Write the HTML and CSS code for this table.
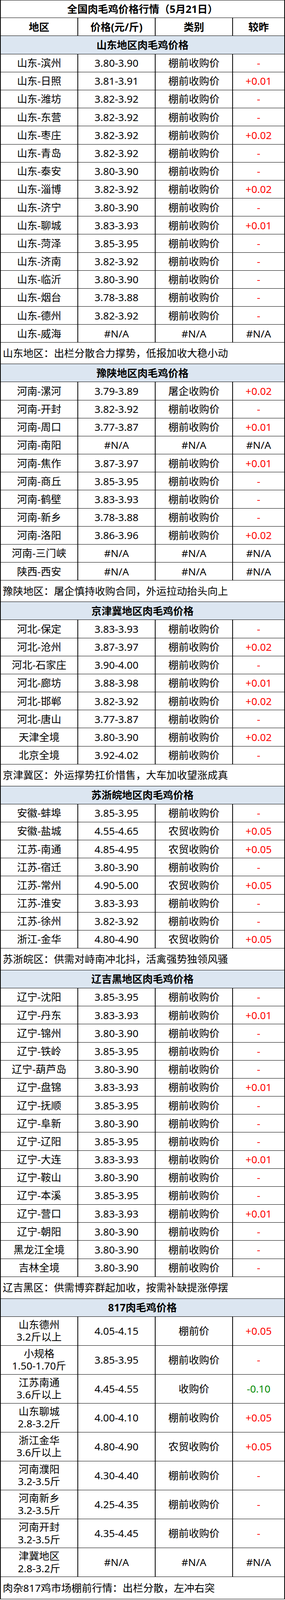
FILE: index.html
```html
<!DOCTYPE html>
<html lang="zh-CN">
<head>
<meta charset="utf-8">
<title>全国肉毛鸡价格行情</title>
<link rel="stylesheet" href="styles.css">
</head>
<body>
<div class="sheet">
  <div class="row title">全国肉毛鸡价格行情（5月21日）</div>
  <div class="row head">
    <div class="c">地区</div><div class="c">价格(元/斤)</div><div class="c">类别</div><div class="c">较昨</div>
  </div>

  <div class="row section">山东地区肉毛鸡价格</div>
  <div class="row"><div class="c">山东-滨州</div><div class="c">3.80-3.90</div><div class="c">棚前收购价</div><div class="c up">-</div></div>
  <div class="row"><div class="c">山东-日照</div><div class="c">3.81-3.91</div><div class="c">棚前收购价</div><div class="c up">+0.01</div></div>
  <div class="row"><div class="c">山东-潍坊</div><div class="c">3.82-3.92</div><div class="c">棚前收购价</div><div class="c up">-</div></div>
  <div class="row"><div class="c">山东-东营</div><div class="c">3.82-3.92</div><div class="c">棚前收购价</div><div class="c up">-</div></div>
  <div class="row"><div class="c">山东-枣庄</div><div class="c">3.82-3.92</div><div class="c">棚前收购价</div><div class="c up">+0.02</div></div>
  <div class="row"><div class="c">山东-青岛</div><div class="c">3.82-3.92</div><div class="c">棚前收购价</div><div class="c up">-</div></div>
  <div class="row"><div class="c">山东-泰安</div><div class="c">3.80-3.90</div><div class="c">棚前收购价</div><div class="c up">-</div></div>
  <div class="row"><div class="c">山东-淄博</div><div class="c">3.82-3.92</div><div class="c">棚前收购价</div><div class="c up">+0.02</div></div>
  <div class="row"><div class="c">山东-济宁</div><div class="c">3.80-3.90</div><div class="c">棚前收购价</div><div class="c up">-</div></div>
  <div class="row"><div class="c">山东-聊城</div><div class="c">3.83-3.93</div><div class="c">棚前收购价</div><div class="c up">+0.01</div></div>
  <div class="row"><div class="c">山东-菏泽</div><div class="c">3.85-3.95</div><div class="c">棚前收购价</div><div class="c up">-</div></div>
  <div class="row"><div class="c">山东-济南</div><div class="c">3.82-3.92</div><div class="c">棚前收购价</div><div class="c up">-</div></div>
  <div class="row"><div class="c">山东-临沂</div><div class="c">3.80-3.90</div><div class="c">棚前收购价</div><div class="c up">-</div></div>
  <div class="row"><div class="c">山东-烟台</div><div class="c">3.78-3.88</div><div class="c">棚前收购价</div><div class="c up">-</div></div>
  <div class="row"><div class="c">山东-德州</div><div class="c">3.82-3.92</div><div class="c">棚前收购价</div><div class="c up">-</div></div>
  <div class="row"><div class="c">山东-威海</div><div class="c">#N/A</div><div class="c">#N/A</div><div class="c">#N/A</div></div>
  <div class="row note note-short">山东地区：出栏分散合力撑势，低报加收大稳小动</div>

  <div class="row section">豫陕地区肉毛鸡价格</div>
  <div class="row"><div class="c">河南-漯河</div><div class="c">3.79-3.89</div><div class="c">屠企收购价</div><div class="c up">+0.02</div></div>
  <div class="row"><div class="c">河南-开封</div><div class="c">3.82-3.92</div><div class="c">棚前收购价</div><div class="c up">-</div></div>
  <div class="row"><div class="c">河南-周口</div><div class="c">3.77-3.87</div><div class="c">棚前收购价</div><div class="c up">+0.01</div></div>
  <div class="row"><div class="c">河南-南阳</div><div class="c">#N/A</div><div class="c">#N/A</div><div class="c">#N/A</div></div>
  <div class="row"><div class="c">河南-焦作</div><div class="c">3.87-3.97</div><div class="c">棚前收购价</div><div class="c up">+0.01</div></div>
  <div class="row"><div class="c">河南-商丘</div><div class="c">3.85-3.95</div><div class="c">棚前收购价</div><div class="c up">-</div></div>
  <div class="row"><div class="c">河南-鹤壁</div><div class="c">3.83-3.93</div><div class="c">棚前收购价</div><div class="c up">-</div></div>
  <div class="row"><div class="c">河南-新乡</div><div class="c">3.78-3.88</div><div class="c">棚前收购价</div><div class="c up">-</div></div>
  <div class="row"><div class="c">河南-洛阳</div><div class="c">3.86-3.96</div><div class="c">棚前收购价</div><div class="c up">+0.02</div></div>
  <div class="row"><div class="c">河南-三门峡</div><div class="c">#N/A</div><div class="c">#N/A</div><div class="c">#N/A</div></div>
  <div class="row"><div class="c">陕西-西安</div><div class="c">#N/A</div><div class="c">#N/A</div><div class="c">#N/A</div></div>
  <div class="row note note-short">豫陕地区：屠企慎持收购合同，外运拉动抬头向上</div>

  <div class="row section">京津冀地区肉毛鸡价格</div>
  <div class="row"><div class="c">河北-保定</div><div class="c">3.83-3.93</div><div class="c">棚前收购价</div><div class="c up">-</div></div>
  <div class="row"><div class="c">河北-沧州</div><div class="c">3.87-3.97</div><div class="c">棚前收购价</div><div class="c up">+0.02</div></div>
  <div class="row"><div class="c">河北-石家庄</div><div class="c">3.90-4.00</div><div class="c">棚前收购价</div><div class="c up">-</div></div>
  <div class="row"><div class="c">河北-廊坊</div><div class="c">3.88-3.98</div><div class="c">棚前收购价</div><div class="c up">+0.01</div></div>
  <div class="row"><div class="c">河北-邯郸</div><div class="c">3.82-3.92</div><div class="c">棚前收购价</div><div class="c up">+0.02</div></div>
  <div class="row"><div class="c">河北-唐山</div><div class="c">3.77-3.87</div><div class="c">棚前收购价</div><div class="c up">-</div></div>
  <div class="row"><div class="c">天津全境</div><div class="c">3.80-3.90</div><div class="c">棚前收购价</div><div class="c up">+0.02</div></div>
  <div class="row"><div class="c">北京全境</div><div class="c">3.92-4.02</div><div class="c">棚前收购价</div><div class="c up">-</div></div>
  <div class="row note">京津冀区：外运撑势扛价惜售，大车加收望涨成真</div>

  <div class="row section">苏浙皖地区肉毛鸡价格</div>
  <div class="row"><div class="c">安徽-蚌埠</div><div class="c">3.85-3.95</div><div class="c">棚前收购价</div><div class="c up">-</div></div>
  <div class="row"><div class="c">安徽-盐城</div><div class="c">4.55-4.65</div><div class="c">农贸收购价</div><div class="c up">+0.05</div></div>
  <div class="row"><div class="c">江苏-南通</div><div class="c">4.85-4.95</div><div class="c">农贸收购价</div><div class="c up">+0.05</div></div>
  <div class="row"><div class="c">江苏-宿迁</div><div class="c">3.80-3.90</div><div class="c">棚前收购价</div><div class="c up">-</div></div>
  <div class="row"><div class="c">江苏-常州</div><div class="c">4.90-5.00</div><div class="c">农贸收购价</div><div class="c up">+0.05</div></div>
  <div class="row"><div class="c">江苏-淮安</div><div class="c">3.83-3.93</div><div class="c">棚前收购价</div><div class="c up">-</div></div>
  <div class="row"><div class="c">江苏-徐州</div><div class="c">3.82-3.92</div><div class="c">棚前收购价</div><div class="c up">-</div></div>
  <div class="row"><div class="c">浙江-金华</div><div class="c">4.80-4.90</div><div class="c">农贸收购价</div><div class="c up">+0.05</div></div>
  <div class="row note">苏浙皖区：供需对峙南冲北抖，活禽强势独领风骚</div>

  <div class="row section">辽吉黑地区肉毛鸡价格</div>
  <div class="row"><div class="c">辽宁-沈阳</div><div class="c">3.85-3.95</div><div class="c">棚前收购价</div><div class="c up">-</div></div>
  <div class="row"><div class="c">辽宁-丹东</div><div class="c">3.83-3.93</div><div class="c">棚前收购价</div><div class="c up">+0.01</div></div>
  <div class="row"><div class="c">辽宁-锦州</div><div class="c">3.80-3.90</div><div class="c">棚前收购价</div><div class="c up">-</div></div>
  <div class="row"><div class="c">辽宁-铁岭</div><div class="c">3.85-3.95</div><div class="c">棚前收购价</div><div class="c up">-</div></div>
  <div class="row"><div class="c">辽宁-葫芦岛</div><div class="c">3.80-3.90</div><div class="c">棚前收购价</div><div class="c up">-</div></div>
  <div class="row"><div class="c">辽宁-盘锦</div><div class="c">3.83-3.93</div><div class="c">棚前收购价</div><div class="c up">+0.01</div></div>
  <div class="row"><div class="c">辽宁-抚顺</div><div class="c">3.85-3.95</div><div class="c">棚前收购价</div><div class="c up">-</div></div>
  <div class="row"><div class="c">辽宁-阜新</div><div class="c">3.80-3.90</div><div class="c">棚前收购价</div><div class="c up">-</div></div>
  <div class="row"><div class="c">辽宁-辽阳</div><div class="c">3.85-3.95</div><div class="c">棚前收购价</div><div class="c up">-</div></div>
  <div class="row"><div class="c">辽宁-大连</div><div class="c">3.83-3.93</div><div class="c">棚前收购价</div><div class="c up">+0.01</div></div>
  <div class="row"><div class="c">辽宁-鞍山</div><div class="c">3.80-3.90</div><div class="c">棚前收购价</div><div class="c up">-</div></div>
  <div class="row"><div class="c">辽宁-本溪</div><div class="c">3.85-3.95</div><div class="c">棚前收购价</div><div class="c up">-</div></div>
  <div class="row"><div class="c">辽宁-营口</div><div class="c">3.83-3.93</div><div class="c">棚前收购价</div><div class="c up">+0.01</div></div>
  <div class="row"><div class="c">辽宁-朝阳</div><div class="c">3.80-3.90</div><div class="c">棚前收购价</div><div class="c up">-</div></div>
  <div class="row"><div class="c">黑龙江全境</div><div class="c">3.80-3.90</div><div class="c">棚前收购价</div><div class="c up">-</div></div>
  <div class="row"><div class="c">吉林全境</div><div class="c">3.80-3.90</div><div class="c">棚前收购价</div><div class="c up">-</div></div>
  <div class="row note">辽吉黑区：供需博弈群起加收，按需补缺提涨停摆</div>

  <div class="row section">817肉毛鸡价格</div>
  <div class="row tall"><div class="c"><div class="two"><span>山东德州</span><span>3.2斤以上</span></div></div><div class="c">4.05-4.15</div><div class="c">棚前价</div><div class="c up">+0.05</div></div>
  <div class="row tall"><div class="c"><div class="two"><span>小规格</span><span>1.50-1.70斤</span></div></div><div class="c">3.85-3.95</div><div class="c">棚前收购价</div><div class="c up">-</div></div>
  <div class="row tall"><div class="c"><div class="two"><span>江苏南通</span><span>3.6斤以上</span></div></div><div class="c">4.45-4.55</div><div class="c">收购价</div><div class="c down">-0.10</div></div>
  <div class="row tall"><div class="c"><div class="two"><span>山东聊城</span><span>2.8-3.2斤</span></div></div><div class="c">4.00-4.10</div><div class="c">棚前收购价</div><div class="c up">+0.05</div></div>
  <div class="row tall"><div class="c"><div class="two"><span>浙江金华</span><span>3.6斤以上</span></div></div><div class="c">4.80-4.90</div><div class="c">农贸收购价</div><div class="c up">+0.05</div></div>
  <div class="row tall"><div class="c"><div class="two"><span>河南濮阳</span><span>3.2-3.5斤</span></div></div><div class="c">4.30-4.40</div><div class="c">棚前收购价</div><div class="c up">-</div></div>
  <div class="row tall"><div class="c"><div class="two"><span>河南新乡</span><span>3.2-3.5斤</span></div></div><div class="c">4.25-4.35</div><div class="c">棚前收购价</div><div class="c up">-</div></div>
  <div class="row tall"><div class="c"><div class="two"><span>河南开封</span><span>3.2-3.5斤</span></div></div><div class="c">4.35-4.45</div><div class="c">棚前收购价</div><div class="c up">-</div></div>
  <div class="row tall"><div class="c"><div class="two"><span>津冀地区</span><span>2.8-3.2斤</span></div></div><div class="c">#N/A</div><div class="c">#N/A</div><div class="c">#N/A</div></div>
  <div class="row note note-last">肉杂817鸡市场棚前行情：出栏分散，左冲右突</div>
</div>
</body>
</html>
```

FILE: styles.css
```css
/* The sheet is drawn on a 729 x 4701 unit grid that is mapped onto
   the window: --u is one horizontal unit, --v one vertical unit. */
:root {
  --u: calc(100vw / 729);
  --v: calc(100vh / 4701);
}

html, body {
  margin: 0;
  padding: 0;
  background: #ffffff;
}

.sheet {
  display: flex;
  flex-direction: column;
  width: calc(729 * var(--u));
  box-sizing: border-box;
  border-top: calc(2 * var(--v)) solid #000;
  border-left: calc(2 * var(--u)) solid #000;
  border-right: calc(2 * var(--u)) solid #000;
  font-family: "Noto Sans", "Noto Sans CJK SC", sans-serif;
  /* 28 units, balanced between the horizontal and vertical unit */
  font-size: calc(14 * var(--u) + 14 * var(--v));
  line-height: 1;
  color: #000;
}

.row {
  display: grid;
  grid-template-columns: calc(198 * var(--u)) calc(198 * var(--u)) calc(198 * var(--u)) 1fr;
  grid-template-rows: 100%;
  flex: 0 0 auto;
  height: calc(53 * var(--v));
  box-sizing: border-box;
  border-bottom: calc(2 * var(--v)) solid #000;
  overflow: hidden;
}

.c {
  display: flex;
  align-items: center;
  justify-content: center;
  text-align: center;
  border-right: calc(2 * var(--u)) solid #000;
  white-space: nowrap;
  min-height: 0;
  min-width: 0;
}

.c:last-child {
  border-right: none;
}

.title {
  display: flex;
  align-items: center;
  justify-content: center;
  height: calc(52 * var(--v));
  font-weight: 700;
}

.head .c {
  font-weight: 700;
}

.section {
  display: flex;
  align-items: center;
  justify-content: center;
  background: #dce6f1;
  font-weight: 700;
}

.note {
  display: flex;
  align-items: center;
  height: calc(64 * var(--v));
  padding-left: calc(5 * var(--u));
  white-space: nowrap;
}

.note-short {
  height: calc(63 * var(--v));
}

.note-last {
  height: calc(65 * var(--v));
}

.tall {
  height: calc(85 * var(--v));
}

.two {
  display: flex;
  flex-direction: column;
  align-items: center;
  line-height: calc(36 * var(--v));
}

.up {
  color: #ff0000;
}

.down {
  color: #008a00;
}
```
